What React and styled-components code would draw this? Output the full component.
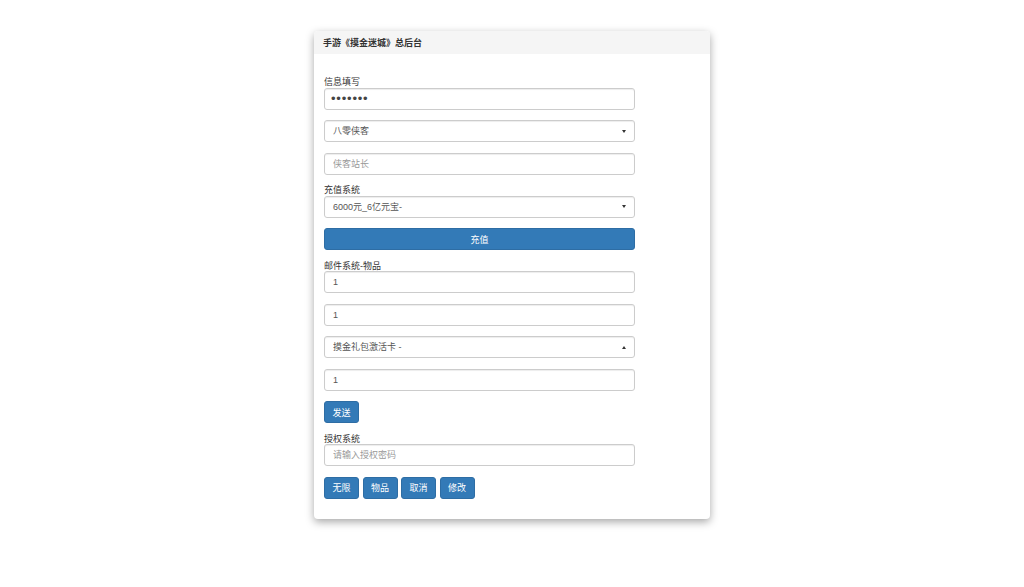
import styled, { createGlobalStyle } from 'styled-components'

const GlobalStyle = createGlobalStyle`
  html, body {
    margin: 0;
    padding: 0;
    background: #fff;
  }
  body {
    font-family: "Liberation Sans", "Noto Sans CJK SC", sans-serif;
    font-size: 9px;
    color: #333;
  }
  * {
    box-sizing: border-box;
  }
`

const Page = styled.div`
  display: flex;
  justify-content: center;
  padding-top: 31px;
  min-height: 587px;
`

const Panel = styled.div`
  width: 396px;
  background: #fff;
  border-radius: 4px;
  box-shadow: 0 3px 9px rgba(0, 0, 0, 0.35);
  overflow: hidden;
  align-self: flex-start;
`

const PanelHeading = styled.div`
  height: 23px;
  background: #f5f5f5;
  padding: 0 9px;
  display: flex;
  align-items: center;
  font-weight: bold;
  font-size: 9px;
  color: #333;
`

const PanelBody = styled.div`
  padding: 23px 10px 20.5px;
  display: flex;
  flex-direction: column;
  width: 331px;
`

const Label = styled.label`
  display: block;
  height: 10.5px;
  line-height: 10px;
  font-size: 9px;
  color: #333;
`

const Field = styled.input`
  display: block;
  width: 311px;
  height: 22px;
  padding: 0 8px;
  margin-bottom: 10.5px;
  border: 1px solid #ccc;
  border-radius: 3px;
  font-family: inherit;
  font-size: 9px;
  color: #555;
  background: #fff;
  box-shadow: inset 0 1px 1px rgba(0, 0, 0, 0.075);
  outline: none;

  &[type='password'] {
    padding-left: 6px;
    font-size: 13px;
    letter-spacing: 0.8px;
    color: #444;
  }

  &::placeholder {
    color: #999;
  }
`

const SelectWrap = styled.div`
  position: relative;
  width: 311px;
  margin-bottom: 10.5px;
`

const Select = styled.select`
  display: block;
  width: 100%;
  height: 22px;
  padding: 0 8px;
  border: 1px solid #ccc;
  border-radius: 3px;
  font-family: inherit;
  font-size: 9px;
  color: #555;
  background: #fff;
  appearance: none;
  -webkit-appearance: none;
  box-shadow: inset 0 1px 1px rgba(0, 0, 0, 0.075);
  outline: none;
`

const Caret = styled.span`
  position: absolute;
  right: 9px;
  top: 50%;
  margin-top: -1.5px;
  width: 0;
  height: 0;
  border-left: 2.5px solid transparent;
  border-right: 2.5px solid transparent;
  ${p => (p.$up ? 'border-bottom: 3px solid #333;' : 'border-top: 3px solid #333;')}
  pointer-events: none;
`

const Button = styled.button`
  display: block;
  height: 22px;
  width: ${p => (p.$block ? '311px' : 'auto')};
  padding: 0 7.5px;
  margin-bottom: ${p => (p.$mb ? '10.5px' : '0')};
  border: 1px solid #2e6da4;
  border-radius: 3px;
  background: #337ab7;
  color: #fff;
  font-family: inherit;
  font-size: 9px;
  cursor: pointer;
  align-self: flex-start;
`

const ButtonRow = styled.div`
  display: flex;
  gap: 3.5px;
`

function Dropdown({ value, up }) {
  return (
    <SelectWrap>
      <Select defaultValue={value}>
        <option value={value}>{value}</option>
      </Select>
      <Caret $up={up} />
    </SelectWrap>
  )
}

export default function App() {
  return (
    <>
      <GlobalStyle />
      <Page>
        <Panel>
          <PanelHeading>手游《摸金迷城》总后台</PanelHeading>
          <PanelBody>
            <Label>信息填写</Label>
            <Field type="password" defaultValue="1234567" />
            <Dropdown value="八零侠客" />
            <Field placeholder="侠客站长" />

            <Label>充值系统</Label>
            <Dropdown value="6000元_6亿元宝-" />
            <Button $block $mb>充值</Button>

            <Label>邮件系统-物品</Label>
            <Field defaultValue="1" />
            <Field defaultValue="1" />
            <Dropdown value="摸金礼包激活卡 -" up />
            <Field defaultValue="1" />
            <Button $mb>发送</Button>

            <Label>授权系统</Label>
            <Field placeholder="请输入授权密码" />
            <ButtonRow>
              <Button>无限</Button>
              <Button>物品</Button>
              <Button>取消</Button>
              <Button>修改</Button>
            </ButtonRow>
          </PanelBody>
        </Panel>
      </Page>
    </>
  )
}
